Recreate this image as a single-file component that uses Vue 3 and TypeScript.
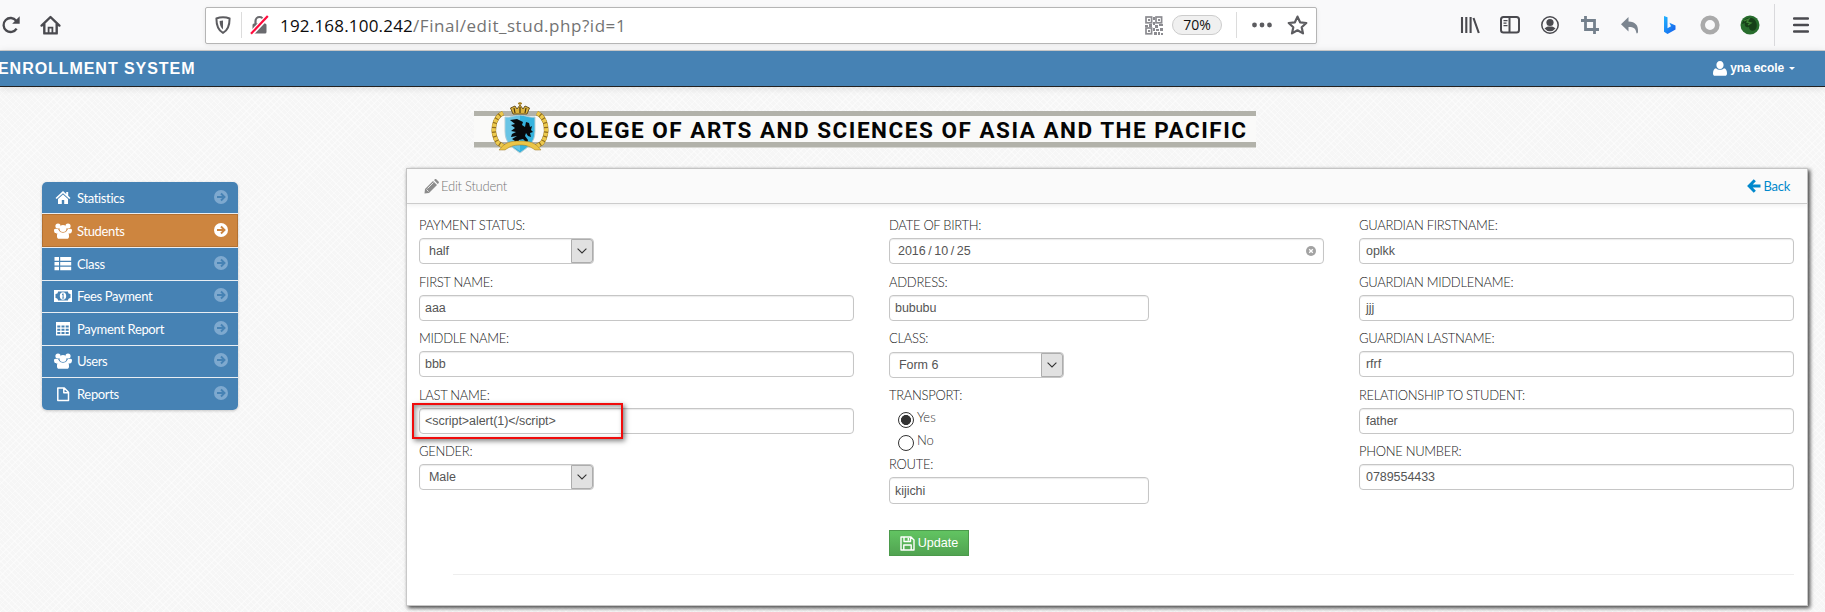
<script setup lang="ts">
interface Field {
  label: string
  value: string
  kind: 'text' | 'select' | 'date'
  short?: boolean
}

interface MenuItem {
  title: string
  icon: 'home' | 'group' | 'list' | 'money' | 'table' | 'file'
  active?: boolean
}

const menu: MenuItem[] = [
  { title: 'Statistics', icon: 'home' },
  { title: 'Students', icon: 'group', active: true },
  { title: 'Class', icon: 'list' },
  { title: 'Fees Payment', icon: 'money' },
  { title: 'Payment Report', icon: 'table' },
  { title: 'Users', icon: 'group' },
  { title: 'Reports', icon: 'file' },
]

const student: Field[] = [
  { label: 'PAYMENT STATUS:', value: 'half', kind: 'select' },
  { label: 'FIRST NAME:', value: 'aaa', kind: 'text' },
  { label: 'MIDDLE NAME:', value: 'bbb', kind: 'text' },
  { label: 'LAST NAME:', value: '<script>alert(1)<\/script>', kind: 'text' },
  { label: 'GENDER:', value: 'Male', kind: 'select' },
]

const details: Field[] = [
  { label: 'DATE OF BIRTH:', value: '2016 / 10 / 25', kind: 'date' },
  { label: 'ADDRESS:', value: 'bububu', kind: 'text', short: true },
  { label: 'CLASS:', value: 'Form 6', kind: 'select' },
]

const guardian: Field[] = [
  { label: 'GUARDIAN FIRSTNAME:', value: 'oplkk', kind: 'text' },
  { label: 'GUARDIAN MIDDLENAME:', value: 'jjj', kind: 'text' },
  { label: 'GUARDIAN LASTNAME:', value: 'rfrf', kind: 'text' },
  { label: 'RELATIONSHIP TO STUDENT:', value: 'father', kind: 'text' },
  { label: 'PHONE NUMBER:', value: '0789554433', kind: 'text' },
]

const columns: Field[][] = [student, details, guardian]
</script>

<template>
  <div class="page">
    <header class="chrome">
      <svg class="reload" width="20" height="20" viewBox="0 0 20 20"><path d="M15.6 13.6A7 7 0 1 1 15.2 5.8" fill="none" stroke="#4a4a4f" stroke-width="2.3" /><path d="M18.7 1.2v7.6h-7.5z" fill="#4a4a4f" /></svg>
      <svg class="home" width="21" height="20" viewBox="0 0 21 20"><path d="M1.6 10.6 10.5 2l8.9 8.6M4.3 9v9.4h12.4V9" fill="none" stroke="#4a4a4f" stroke-width="2.4" stroke-linejoin="round" stroke-linecap="round" /><path d="M8.6 18v-5.4h3.8V18" fill="none" stroke="#4a4a4f" stroke-width="1.8" /></svg>
      <div class="urlbar">
        <svg class="shield" width="16" height="18" viewBox="0 0 16 18"><path d="M8 1.2c2.3 0 4.7.5 6.6 1.3 0 6-.8 11.4-6.6 14.4C2.2 13.9 1.4 8.5 1.4 2.5 3.3 1.7 5.7 1.2 8 1.2z" fill="none" stroke="#5c5c60" stroke-width="2" stroke-linejoin="round" /><path d="M8 4.5v8.9C5.5 11.5 4.7 8.8 4.6 5.1z" fill="#5c5c60" /></svg>
        <i class="rule" />
        <svg class="lock" width="19" height="20" viewBox="0 0 19 20"><path d="M5.5 9V6a4 4 0 0 1 8 0v3" fill="none" stroke="#6a6a6e" stroke-width="2.2" /><rect x="2.5" y="8.5" width="14" height="10" rx="1.5" fill="#6a6a6e" /><path d="M1.5 18.5 17.5 1.5" stroke="#fff" stroke-width="5" /><path d="M1 18.8 17.8 1" stroke="#ff0a3c" stroke-width="2.2" /></svg>
        <span class="url"><b>192.168.100.242</b>/Final/edit_stud.php?id=1</span>
        <svg class="qr" width="18" height="19" viewBox="0 0 18 19"><g fill="none" stroke="#8b8b90" stroke-width="1.7"><rect x="1" y="1" width="5.6" height="5.8" /><rect x="11" y="1" width="5.6" height="5.8" /><rect x="1" y="12" width="5.6" height="5.8" /></g><path d="M3 3h2v2H3zM13 3h2v2h-2zM3 14h2v2H3zM8 1h2v3H8zM8 6h2v3H8zM0 9h3v2H0zM4 8h3v3H4zM10 9h3v3h-3zM14 8h4v2h-4zM8 12h2v3H8zM11 13h3v2h-3zM15 12h3v3h-3zM9 16h3v3H9zM13 16h2v3h-2zM16 17h2v2h-2z" fill="#8b8b90" /></svg>
        <span class="zoom">70%</span>
        <i class="rule second" />
        <svg class="dots" width="20" height="6" viewBox="0 0 20 6"><g fill="#5c5c60"><circle cx="2.5" cy="3" r="2.4" /><circle cx="10" cy="3" r="2.4" /><circle cx="17.5" cy="3" r="2.4" /></g></svg>
        <svg class="star" width="21" height="20" viewBox="0 0 21 20"><path d="m10.5 1.600 2.600 5.700 6.200.7-4.600 4.200 1.300 6.200-5.500-3.100L5 18.400l1.300-6.200L1.700 8l6.200-.7z" fill="none" stroke="#5c5c60" stroke-width="2.2" stroke-linejoin="round" /></svg>
      </div>
      <div class="tools">
        <svg width="20" height="20" viewBox="0 0 20 20"><path d="M2 2v16M6.3 2v16M10.6 2v16M13.5 3l5.3 15" stroke="#4a4a4f" stroke-width="2.1" fill="none" /></svg>
        <svg width="20" height="20" viewBox="0 0 20 20"><rect x="1" y="2" width="18" height="15.5" rx="2.5" fill="none" stroke="#4a4a4f" stroke-width="2" /><path d="M9.5 2v15" stroke="#4a4a4f" stroke-width="2" /><path d="M3.5 5.7h4M3.5 8.2h3M3.5 10.7h4" stroke="#4a4a4f" stroke-width="1.2" /></svg>
        <svg width="20" height="20" viewBox="0 0 20 20"><circle cx="10" cy="10" r="8.2" fill="none" stroke="#4a4a4f" stroke-width="1.5" /><circle cx="10" cy="7.5" r="3.6" fill="#4a4a4f" /><path d="M4.5 13.5c2-1.800 3-2 5.500-2s3.500.2 5.500 2a7 7 0 0 1-11 0z" fill="#4a4a4f" /></svg>
        <svg width="20" height="20" viewBox="0 0 20 20"><path d="M5.5 1v13.500H19M1 5.500h13.500V19" fill="none" stroke="#74808c" stroke-width="2.8" /></svg>
        <svg width="20" height="20" viewBox="0 0 20 20"><path d="M8.5 2v4.500c7 .2 10 4 9.500 10.500-.2 1.600-1.500 2-1.700.5-.6-4-2.800-5.600-7.800-5.500v4.500L1 9.300z" fill="#7c858f" /></svg>
        <svg width="20" height="20" viewBox="0 0 20 20"><defs><linearGradient id="bing" x1="0" y1="0" x2="1" y2="1"><stop offset="0" stop-color="#21b5ff" /><stop offset="1" stop-color="#155bea" /></linearGradient></defs><path d="m4 1 3.500 1.300v11l3.500-2-1.600-3.600 6.100 2.700v4L7.500 19 4 16.800z" fill="url(#bing)" /></svg>
        <svg width="20" height="20" viewBox="0 0 20 20"><circle cx="10" cy="10" r="7.3" fill="none" stroke="#aaa" stroke-width="4.6" /></svg>
        <svg width="20" height="20" viewBox="0 0 20 20"><circle cx="10" cy="10" r="9.5" fill="#286d2d" /><path d="M2 9c1-5 7-8 12-5 3 3 4 8 1 11-3 2-6 0-6-3-3 1-5-1-4-4z" fill="#174019" /><path d="m4 6 5-2-2 3 4 1-3 2" fill="none" stroke="#3f8436" stroke-width="1.3" /></svg>
      </div>
      <i class="chrome-line" />
      <svg class="burger" width="16" height="18" viewBox="0 0 16 18"><path d="M1 2.500h14M1 9h14M1 15.500h14" stroke="#4a4a4f" stroke-width="2.3" stroke-linecap="round" /></svg>
    </header>

    <nav class="navbar">
      <strong class="brand">ENROLLMENT SYSTEM</strong>
      <span class="user">
        <svg width="14" height="15" viewBox="0 0 14 15"><path d="M7 0C9.300 0 10.600 1.800 10.600 4S9.300 8 7 8 3.400 6.200 3.400 4 4.700 0 7 0zM3 7.200c2.400 2.200 5.600 2.200 8 0 2 .3 3 2.300 3 5.300 0 1.500-.8 2.300-2 2.300H2c-1.200 0-2-.8-2-2.300 0-3 1-5 3-5.300z" fill="#fff" /></svg>
        <b>yna ecole</b><i class="caret" />
      </span>
    </nav>

    <div class="banner">
      <svg width="782" height="54" viewBox="0 0 782 54">
        <rect x="0" y="9" width="782" height="37" fill="#fafaf9" />
        <rect x="0" y="9" width="782" height="5" fill="#b2b2aa" />
        <rect x="0" y="40" width="782" height="5.5" fill="#b2b2aa" />
        <g fill="none" stroke="#8f6c1c" stroke-width="4.600">
          <path d="M29 11C19 16 17 31 24 41l8 5" />
          <path d="M63 11c10 5 12 20 5 30l-8 5" />
        </g>
        <g fill="none" stroke="#ecc94e" stroke-width="4" stroke-dasharray="3.400 1.200">
          <path d="M29 11C19 16 17 31 24 41l8 5" />
          <path d="M63 11c10 5 12 20 5 30l-8 5" />
        </g>
        <path d="M31 15c6 1 10-2 15-2s9 3 15 2v14c0 12-7 16-15 22-8-6-15-10-15-22z" fill="#35b3de" stroke="#b9cdd3" />
        <path d="M31 15c6 1 10-2 15-2v36c-8-5-15-8-15-20z" fill="#9cd6ec" opacity=".5" />
        <path d="m36 18 7-1 6 3-1 3 3 2 1-5 3 1 1 4 2-1-1 4 2 2-3 1 1 4-3-1-2-3-1 3 3 4-1 3-4-4-4 1-2 4-4 1 2-4-3-2 5-3-6 1 1-3 4-2-5-1 4-3-4-3 4-1z" fill="#080a0c" />
        <path d="M25 48c6-8 12-9 21-9s15 1 21 9l-6 0c-4-3-8-5-15-5s-11 2-15 5z" fill="#ebc548" stroke="#9c7620" stroke-width=".5" />
        <path d="m39 12-2.500-6 4.500-2 2 3 3-4 3 4 2-3 4.500 2-2.500 6z" fill="#dcb33c" stroke="#5b4617" stroke-width=".9" />
        <path d="M41 11 40 6M46 11V5M51 11l1-5" stroke="#4a3912" stroke-width="1.200" />
        <path d="M46 0v4M44 1.500h4" stroke="#a98224" stroke-width="1.300" />
        <text class="banner-text" x="79" y="35.500" textLength="693" lengthAdjust="spacing">COLEGE OF ARTS AND SCIENCES OF ASIA AND THE PACIFIC</text>
      </svg>
    </div>

    <main class="layout">
      <ul class="menu">
        <li v-for="item in menu" :key="item.title" :class="{ active: item.active }">
          <svg class="menu-icon" width="18" height="16" viewBox="0 0 18 16">
            <g fill="#fff">
              <path v-if="item.icon === 'home'" d="M9 1 1.500 8l1.200 1L9 3.300 15.300 9l1.200-1-2.300-2.200V2h-2v2zM9 4.500 4 9v5h3.800v-4h2.400v4H14V9z" />
              <template v-else-if="item.icon === 'group'">
                <circle cx="4" cy="3" r="2.600" /><circle cx="14" cy="3" r="2.600" />
                <path d="M0 6.500C1.500 5 2.500 6 4 6l2 3-3 1.500c-2 0-3-.5-3-4zM18 6.500C16.500 5 15.500 6 14 6l-2 3 3 1.500c2 0 3-.5 3-4z" />
                <circle cx="9" cy="5.500" r="3.500" />
                <path d="M5 8.500c2.500 1.500 5.500 1.500 8 0 1.800.8 2 2.500 2 5 0 1.500-.8 2.300-2 2.300H5c-1.200 0-2-.8-2-2.300 0-2.500.2-4.200 2-5z" />
              </template>
              <path v-else-if="item.icon === 'list'" d="M.5 1H5v3.800H.5zM6.200 1h11v3.800h-11zM.5 6H5v3.500H.5zM6.200 6h11v3.500h-11zM.5 10.700H5v3.600H.5zM6.200 10.700h11v3.600h-11z" />
              <path v-else-if="item.icon === 'money'" fill-rule="evenodd" d="M0 2h18v12H0zM4 3.500a2.500 2.500 0 0 1-2.500 2.500v4A2.500 2.500 0 0 1 4 12.500h10a2.500 2.500 0 0 1 2.500-2.500V6A2.500 2.500 0 0 1 14 3.500zM9 4.200c2 0 3.200 1.700 3.200 3.800S11 11.800 9 11.800 5.800 10.100 5.800 8 7 4.200 9 4.200zM8 6v1l.6-.2v2.900H8v.8h2.200v-.8h-.6V5.500h-.8z" />
              <path v-else-if="item.icon === 'table'" fill-rule="evenodd" d="M2 1h14v13.500H2zM3.300 4.500V6.500h3V4.500zm4.200 0V6.500h3V4.500zm4.200 0V6.500h3V4.500zM3.300 7.700v2h3v-2zm4.200 0v2h3v-2zm4.200 0v2h3v-2zM3.300 11v2h3v-2zm4.200 0v2h3v-2zm4.200 0v2h3v-2z" />
            </g>
            <path v-if="item.icon === 'file'" d="M3.800 2h6.500l4.200 4.200v8.300H3.800zM9.800 2v4.700h4.700" fill="none" stroke="#fff" stroke-width="1.500" stroke-linejoin="round" />
          </svg>
          <span>{{ item.title }}</span>
          <svg class="go" width="14" height="14" viewBox="0 0 14 14"><circle cx="7" cy="7" r="7" /><path d="M3 7h7M7 3.500 10.500 7 7 10.500" fill="none" stroke-width="1.900" /></svg>
        </li>
      </ul>

      <section class="panel">
        <div class="panel-head">
          <span class="title"><svg width="15" height="15" viewBox="0 0 15 15"><path d="M1 10 9 2l4 4-8 8-4.500.5zM10 1l1-.8c.6-.3 1-.2 1.500.3L14.500 2.500c.5.600.5 1.200 0 1.700L13.700 5z" fill="#8c8c8c" /><path d="m2.500 10.500 2 2M3.500 9.500l6-6" stroke="#fafafa" stroke-width=".8" /></svg>Edit Student</span>
          <a class="back"><svg width="14" height="14" viewBox="0 0 14 14"><path d="M7.800 1.300 2.200 7l5.600 5.700M2.500 7H13.500" fill="none" stroke="#08c" stroke-width="3" /></svg>Back</a>
        </div>
        <div class="form">
          <div v-for="(fields, c) in columns" :key="c" class="column">
            <div v-for="(f, i) in fields" :key="f.label" class="field" :class="['row' + i, { nudge: f.label === 'CLASS:' }]">
              <label>{{ f.label }}</label>
              <div class="control" :class="[f.kind, { short: f.short }]">
                <span>{{ f.value }}</span>
                <i v-if="f.kind === 'select'" class="drop"><svg width="10" height="6" viewBox="0 0 10 6"><path d="m.6.7 4.400 4.300L9.400.7" fill="none" stroke="#333" stroke-width="1.100" /></svg></i>
                <svg v-if="f.kind === 'date'" class="clear" width="10" height="10" viewBox="0 0 10 10"><circle cx="5" cy="5" r="5" fill="#a3a3a3" /><path d="m3.200 3.200 3.600 3.600M6.800 3.200 3.200 6.800" stroke="#fff" stroke-width="1.300" /></svg>
              </div>
              <div v-if="f.label === 'LAST NAME:'" class="highlight" />
            </div>
            <template v-if="c === 1">
              <div class="transport">
                <label>TRANSPORT:</label>
                <div class="radio"><i class="dot checked" /><span>Yes</span></div>
                <div class="radio"><i class="dot" /><span>No</span></div>
              </div>
              <div class="field">
                <label>ROUTE:</label>
                <div class="control short tall"><span>kijichi</span></div>
              </div>
              <button class="update" type="button">
                <svg width="15" height="15" viewBox="0 0 15 15"><path d="M1 1h10l3 3v10H1zM4 1v4.500h6.500V1M3.800 14V9h7.400v5M8.300 2v2.500" fill="none" stroke="#fff" stroke-width="1.400" stroke-linejoin="round" /></svg>Update
              </button>
            </template>
          </div>
        </div>
        <hr class="divider">
      </section>
    </main>
  </div>
</template>

<style>
body {
  margin: 0;
  overflow: hidden;
}
</style>

<style scoped>
.page {
  width: 1825px;
  height: 612px;
  overflow: hidden;
  box-sizing: border-box;
  color: #333;
  font-family: "Liberation Sans", Arial, sans-serif;
  background:
    repeating-linear-gradient(45deg, rgba(255, 255, 255, .4) 0 1px, transparent 1px 4px),
    repeating-linear-gradient(-45deg, rgba(255, 255, 255, .4) 0 1px, transparent 1px 5px),
    #f6f6f6;
}
svg { display: block; flex: none; }

.chrome {
  height: 50px;
  display: flex;
  align-items: center;
  background: #f9f9fa;
  border-bottom: 1px solid #cfcfcf;
}
.reload { margin-left: 1px; }
.home { margin-left: 19px; }
.urlbar {
  box-sizing: border-box;
  width: 1112px;
  height: 37px;
  margin-left: 144px;
  display: flex;
  align-items: center;
  flex: none;
  background: #fff;
  border: 1px solid #b5b5b5;
  border-radius: 2px;
  box-shadow: 0 1px 4px rgba(0, 0, 0, .08);
}
.shield { margin-left: 9px; }
.rule { width: 1px; height: 26px; margin-left: 10px; background: #dcdcdc; }
.rule.second { margin-left: 14px; }
.lock { margin-left: 8px; }
.url {
  width: 865px;
  margin-left: 11px;
  font: 17px "Open Sans", sans-serif;
  letter-spacing: .54px;
  color: #737373;
  white-space: nowrap;
}
.url b { font-weight: 400; letter-spacing: .2px; color: #0c0c0d; }
.zoom {
  box-sizing: border-box;
  width: 50px;
  height: 20px;
  margin-left: 9px;
  border: 1px solid #ccc;
  border-radius: 10px;
  background: #f0f0f0;
  font: 14px/17px "Open Sans", sans-serif;
  text-align: center;
  color: #111;
}
.dots { margin-left: 15px; }
.star { margin-left: 15px; }
.tools { display: flex; gap: 20px; margin-left: 143px; }
.chrome-line { width: 1px; height: 42px; margin-left: 14px; background: #d9d9dc; }
.burger { margin-left: 18px; }

.navbar {
  height: 35px;
  display: flex;
  align-items: center;
  justify-content: space-between;
  background: #4682b4;
  border-bottom: 1px solid #222;
  color: #fff;
  box-shadow: 0 1px 8px rgba(0, 0, 0, .12);
}
.brand { margin-left: -2px; font-size: 16px; letter-spacing: .95px; }
.user { display: flex; align-items: center; margin-right: 30px; font-size: 12px; }
.user b { margin: -2px 0 0 3px; letter-spacing: -.1px; }
.caret { margin-left: 5px; border: 3px solid transparent; border-top-color: #fff; border-bottom: 0; }

.banner { height: 65px; padding: 15px 0 0 474px; }
.banner-text { font: 700 22.500px Roboto, sans-serif; fill: #050505; }

.layout { display: flex; align-items: flex-start; padding-top: 1px; }
.menu {
  width: 196px;
  margin: 14px 0 0 42px;
  padding: 0;
  list-style: none;
  border-radius: 5px;
  overflow: hidden;
  box-shadow: 0 1px 3px rgba(0, 0, 0, .2);
}
.menu li {
  box-sizing: border-box;
  height: 32.400px;
  display: flex;
  align-items: center;
  padding: 0 10px 0 12px;
  color: #fff;
  background: #4682b4;
  border-bottom: 1px solid #e9eef3;
  font: 13px Lato, sans-serif;
  letter-spacing: -.35px;
}
.menu li:last-child { border-bottom: 0; }
.menu li.active {
  height: 34px;
  background: #cd853f;
  box-shadow: inset 0 0 0 1px rgba(120, 70, 20, .3);
}
.menu span { flex: 1; margin-left: 5px; }
.go { margin-top: -2px; }
.go circle { fill: #7ea9cf; }
.go path { stroke: #4682b4; }
.active .go circle { fill: #fff; }
.active .go path { stroke: #cd853f; }

.panel {
  box-sizing: border-box;
  width: 1402px;
  height: 438px;
  margin-left: 168px;
  flex: none;
  background: #fff;
  border: 1px solid #c8c8c8;
  box-shadow: 2px 2px 4px #444;
}
.panel-head {
  height: 34px;
  display: flex;
  align-items: center;
  justify-content: space-between;
  padding: 0 17px;
  background: #fafafa;
  border-bottom: 1px solid #ccc;
  box-shadow: 0 1px 5px rgba(0, 0, 0, .08);
  font: 300 13px Lato, sans-serif;
  letter-spacing: -.25px;
  color: #777;
}
.title, .back { display: flex; align-items: center; gap: 2px; }
.back { color: #08c; font-weight: 400; }
.form { display: flex; gap: 35px; padding: 9px 0 0 12px; height: 352px; }
.column { width: 435px; }
.field { position: relative; height: 57px; }
.field.row1, .field.row3 { height: 56px; }
.field.nudge label { height: 26px; }
label {
  display: block;
  height: 25px;
  font: 300 13px/24px Lato, sans-serif;
  letter-spacing: -.3px;
  color: #222;
  white-space: nowrap;
}
.control {
  box-sizing: border-box;
  width: 435px;
  height: 26px;
  display: flex;
  align-items: center;
  justify-content: space-between;
  padding-left: 5px;
  background: #fff;
  border: 1px solid #c6c6c6;
  border-radius: 4px;
  box-shadow: inset 0 1px 1px rgba(0, 0, 0, .08);
  font-size: 12.500px;
  letter-spacing: -.05px;
  color: #555;
}
.column:last-child .control { padding-left: 6px; }
.control.short { width: 260px; }
.control.tall { height: 27px; }
.control.select { width: 175px; padding-left: 9px; }
.control.date { padding: 0 7px 0 8px; word-spacing: -.8px; }
.drop {
  box-sizing: border-box;
  width: 22px;
  height: 24px;
  display: grid;
  place-items: center;
  background: #e1e1e1;
  border: 1px solid #adadad;
  border-radius: 0 3px 3px 0;
}
.highlight {
  position: absolute;
  left: -7px;
  top: 20px;
  box-sizing: border-box;
  width: 211px;
  height: 36px;
  border: 2px solid #f00c0c;
  box-shadow: 2px 2px 5px rgba(0, 0, 0, .5), inset 2px 2px 5px rgba(0, 0, 0, .4);
}
.transport { height: 69px; }
.radio { height: 23px; display: flex; align-items: center; padding-left: 9px; font: 300 13px Lato, sans-serif; }
.radio span { margin: -6px 0 0 3px; }
.dot { box-sizing: border-box; width: 16px; height: 16px; border: 1px solid #333; border-radius: 50%; }
.dot.checked { background: radial-gradient(circle, #333 0 4.700px, #fff 5.300px); }
.update {
  box-sizing: border-box;
  width: 80px;
  height: 26px;
  margin-top: 21px;
  display: flex;
  align-items: center;
  justify-content: center;
  gap: 3px;
  padding: 0;
  border: 1px solid #4b9a4b;
  background: linear-gradient(#62c462, #51a351);
  color: #fff;
  font: 12.600px "Liberation Sans", Arial, sans-serif;
}
.divider { margin: 9px 13px 0 46px; border: 0; border-top: 1px solid #eee; }
</style>
